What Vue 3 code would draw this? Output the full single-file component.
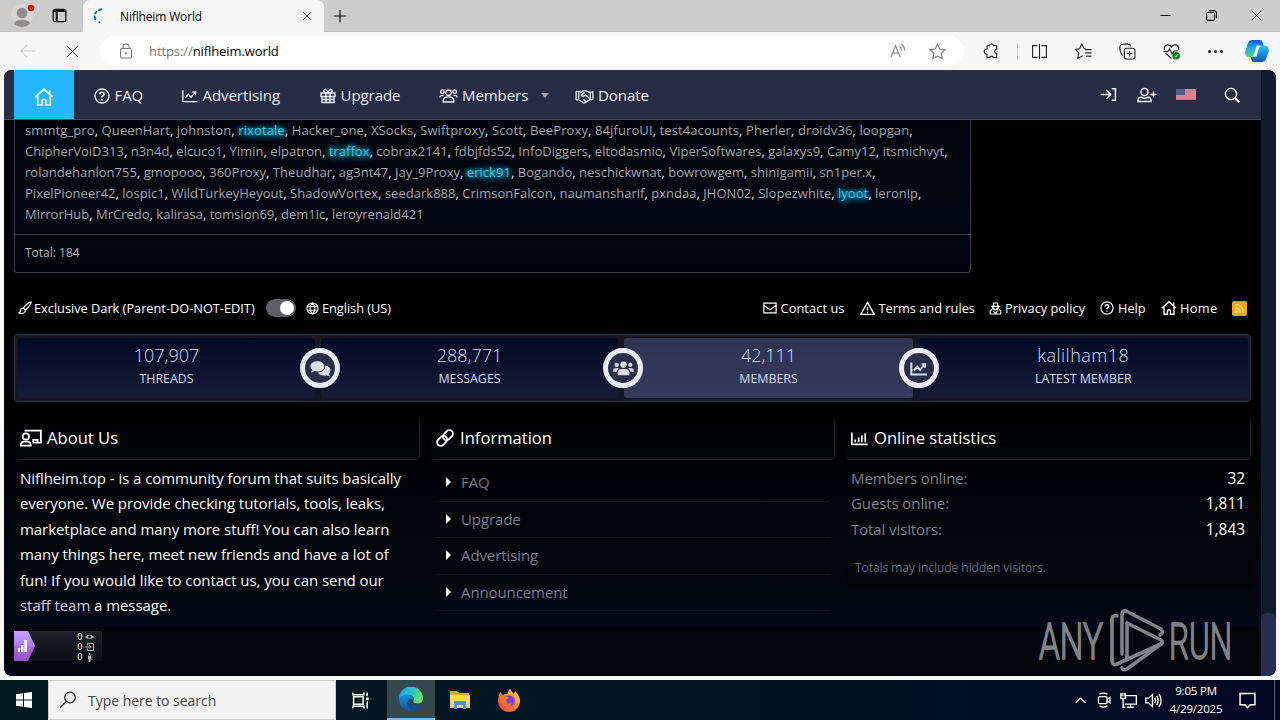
<script setup>
import { h } from 'vue'

// Outline icons share a 16-unit grid and inherit the text colour.
const icons = {
  home: '<path d="M1 8 8 1.8 15 8M3 6.8V14.3H6.5V10.6Q8 9 9.5 10.6V14.3H13V6.8M12.6 5.4V2.6"/>',
  help: '<circle cx="8" cy="8" r="7"/><path d="M5.7 6.3Q5.9 4.3 8 4.3T10.2 6.2Q10.1 7.3 8 8.4V9.6M8 11V12.4" stroke-width="1.6"/>',
  chart: '<path d="M.8 2.3V13.6H15.4M3.4 9.7 6.4 6.4 9 9.2 13.2 4.4M10.4 4H13.6V7.2"/>',
  gift: '<path d="M1 5H15V8.5H1ZM2 8.5V14.5H14V8.5M6 5V14.5M10 5V14.5M8 5Q5 5 3.8 3.6 3.6 1.4 5.6 1.5 7 1.8 8 5 9 1.8 10.4 1.5 12.4 1.4 12.2 3.6 11 5 8 5M2 11.5H14"/>',
  login: '<path d="M.5 8H9.7M5.8 3.8 10 8 5.8 12.2M11 2.5H14.5V13.5H11"/>',
  search: '<circle cx="7" cy="7" r="5.6"/><path d="M11 11 15.2 15.2" stroke-width="2"/>',
  brush: '<path d="M15 1Q12 1 6 8L8.5 10.5Q15 4 15 1ZM6 8Q2.5 8 3 12L1 13.5Q7.5 16 8.5 10.5"/>',
  globe: '<circle cx="8" cy="8" r="6.8"/><path d="M1.2 5.8H14.8M1.2 10.2H14.8M8 1.2C4 5 4 11 8 14.8M8 1.2C12 5 12 11 8 14.8"/>',
  mail: '<path d="M1 2.5H15V13.5H1ZM1 4.8 8 10 15 4.8"/>',
  warn: '<path d="M8 1.5 15.2 14.3H.8ZM8 6V10.2M8 11.4V12.8"/>',
  spy: '<path d="M5 5 6 1.2H10L11 5M2.5 5.3H13.5M4.5 6V8Q8 11 11.5 8V6M4 9 1.5 11V14.8H14.5V11L12 9M5 11 8 14 11 11M5 7.5H7M9 7.5H11"/>',
  link: '<g transform="rotate(-45 8 8)"><rect x="-.6" y="4.8" width="10" height="6.4" rx="3.2"/><rect x="6.6" y="4.8" width="10" height="6.4" rx="3.2"/></g>',
  bars: '<path d="M.8 2.3V13.6H15.6M4 9V11.5M7.2 7V11.5M10.2 5V11.5M13.4 3V11.5"/>',
  x: '<path d="M2 2 14 14M14 2 2 14"/>',
  plus: '<path d="M8 1V15M1 8H15"/>',
  min: '<path d="M2.5 8H13.5"/>',
  restore: '<rect x="2.8" y="4.7" width="8.5" height="8.5" rx="1.5"/><path d="M5 2.8H10.5Q13.2 2.8 13.2 5.5V11"/>',
  back: '<path d="M15.5 8H1M7 2 1 8 7 14"/>',
  lock: '<rect x="2.5" y="5.5" width="11" height="9.5" rx="1.5"/><path d="M5 5.5V3.6Q5 1 8 1T11 3.6V5.5"/><circle cx="8" cy="10.3" r=".6"/>',
  star: '<path d="M8 1 10.2 5.6 15.2 6.2 11.5 9.7 12.5 14.8 8 12.3 3.5 14.8 4.5 9.7.8 6.2 5.8 5.6Z"/>',
  read: '<path d="M1 14 5.6 2.6 10.2 14M2.6 10H8.6M9.5 3.5Q11.4 4.8 11.5 7.5M11 1Q14.5 3 14.6 7.5"/>',
  puzzle: '<path d="M3.8 2.6H6.2Q6.4 1 8 1T9.8 2.6H13V5.8Q11 6 11 7.8T13 9.8V13.8H9.8Q9.5 12.4 8 12.4T6.2 13.8H3.8V10.6Q1.2 10.4 1.2 8.1T3.8 5.7Z"/>',
  split: '<path d="M6 2.5H1.5V13.5H6M10 2.5H14.5V13.5H10M8 .8V15.2"/>',
  favs: '<path d="M10 5.4 8.6 5.2 6.4 1 4.4 5.4.6 6 3.4 9.3 2.6 14.3 7.2 12M9.4 6.2H15.6M9.2 9.3H15.6M10.4 12.4H15.6"/>',
  collect: '<rect x="5" y="5" width="10" height="10" rx="2"/><path d="M10 7.3V12.7M7.3 10H12.7M3.5 11.8Q.8 9 .8 4 .8 1.6 3 1.2L8 .8Q10.6 1 11.4 3.2"/>',
  heart: '<path d="M1.2 6.4Q.6 2.4 4.2 1.8 6.6 1.6 8 3.8 9.4 1.6 11.8 1.8 15.4 2.4 14.8 6.4M2.4 9.5 8 14.6M.5 8H4.5L6.2 5.5 8.6 10.5 10.4 7.5H14"/><circle cx="12.4" cy="12" r="3.6" fill="#107c10" stroke="none"/><path d="M10.8 12 12 13.2 14 10.8" stroke="#fff" stroke-width=".9"/>',
  pane: '<rect x="1.2" y="1.6" width="13.6" height="13" rx="2" stroke-width="1.4"/><path d="M1.5 3.2H14.5M5 4V14" stroke-width="2.2"/>',
  up: '<path d="M2 11 8 5 14 11"/>',
  meet: '<rect x="2.5" y="4.6" width="8.5" height="7" rx="1"/><path d="M11 7.2 14 5.4V10.8L11 9M3.5 2.3Q7.5-.2 11.5 2.3M3.5 13.9Q7.5 16.4 11.5 13.9"/>',
  net: '<path d="M5.5 3.4H15.4V11.4H4.4M10 11.4V14.4M6.5 14.4H13M.8 1.8H5V6H.8ZM2.9 6V14.4H5M2 3V4M3.8 3V4"/>',
  sound: '<path d="M.8 5.8H3.4L7 2.4V13.6L3.4 10.2H.8ZM9 5.5Q10.6 8 9 10.5M11 3.7Q13.8 8 11 12.3M13.2 2Q17 8 13.2 14"/>',
  note: '<path d="M1 1.5H15V12H10.5L8 14.8 5.5 12H1Z"/>',
  task: '<path d="M1.500 4.500H10.500V11.500H1.500ZM.8.500V2.500H11.200V.500M.8 15.500V13.500H11.200V15.500M14.300 .5V4M14.300 9V15.500"/><path d="M13 5.200H15.600V7.800H13Z" fill="currentColor" stroke="none"/>',
}
const wide = {
  group: '<circle cx="10" cy="4.6" r="2.9"/><circle cx="3.6" cy="3.4" r="1.9"/><circle cx="16.4" cy="3.4" r="1.9"/><path d="M4.5 14.3V12Q5 9 10 9T15.5 12V14.3ZM1 9.5Q1 7 4.8 7.3M19 9.5Q19 7 15.2 7.3"/>',
  shake: '<path d="M1 3.2H4L6 4.2 8.6 2.6H12L14.6 4H19M1 12H4L8.5 15Q10 15.6 11.4 14.4L16 11.8H19M1.2 3V12.2M18.8 3V12.2M4 4V11M16 4V11M10 4.4 6.8 7Q8.4 9.6 11.2 6.8L15.5 11M9 11.5 11 13.5"/>',
  useradd: '<circle cx="7.5" cy="5" r="3.6"/><path d="M1 14.5V13Q1 10.6 4 10.3L7.5 11.4 11 10.3Q14 10.6 14 13V14.5ZM13.5 7.5H19.5M16.5 4.5V10.5"/>',
  teach: '<circle cx="5.3" cy="6.6" r="2.9"/><path d="M.9 15V13.8Q1 11.4 4 11.4H6.8Q9.8 11.6 9.8 15ZM5 2.2V1.2H19V12.2H11.5M12 12V9.6H16V12"/>',
  groupfill: '<g fill="currentColor" stroke="none"><circle cx="10" cy="4.4" r="3"/><circle cx="3.5" cy="4.6" r="2"/><circle cx="16.5" cy="4.6" r="2"/><path d="M4.4 14.4V12Q4.8 8.4 8 8.4H12Q15.2 8.4 15.6 12V14.4ZM.2 11V9.4Q.6 7.4 4.6 7.6L5.4 8.2Q3.6 9.4 3.4 11ZM19.8 11V9.4Q19.4 7.4 15.4 7.6L14.6 8.2Q16.4 9.4 16.6 11Z"/></g>',
  chat: '<g fill="currentColor" stroke="none"><path d="M7 1.2C10.8 1.2 13.6 3.2 13.6 6S10.8 10.8 7 10.8Q5.6 10.8 4.4 10.4 2.8 11.6.8 11.7 2 10.4 2.2 9.2.4 7.8.4 6C.4 3.2 3.2 1.2 7 1.2Z"/><path d="M14.6 5.2Q19.6 6.2 19.6 10 19.6 11.8 18 13 18.2 14.4 19.3 15.5 17 15.4 15.6 14.4 9.6 15.6 7.4 11.8 14.8 11.4 14.6 5.2Z"/></g>',
}
const Ico = (p) => h('svg', {
  class: 'ico',
  viewBox: wide[p.n] ? '0 0 20 16' : '0 0 16 16',
  width: p.w || 16,
  height: p.t || p.w || 16,
  innerHTML: wide[p.n] || icons[p.n],
})
Ico.props = ['n', 'w', 't']

const nav = [
  { n: 'help', w: 16, t: 'FAQ', k: 'faq' },
  { n: 'chart', w: 16, t: 'Advertising', k: 'adv' },
  { n: 'gift', w: 16, t: 'Upgrade', k: 'upg' },
  { n: 'group', w: 19, t: 'Members', k: 'mem' },
  { n: 'shake', w: 19, t: 'Donate', k: 'don' },
]
const glow = ['rixotale', 'traffox', 'erick91', 'lyoot']
const lines = [
  'smmtg_pro, QueenHart, johnston, rixotale, Hacker_one, XSocks, Swiftproxy, Scott, BeeProxy, 84jfuroUI, test4acounts, Pherler, droidv36, loopgan,',
  'ChipherVoiD313, n3n4d, elcuco1, Yimin, elpatron, traffox, cobrax2141, fdbjfds52, InfoDiggers, eltodasmio, ViperSoftwares, galaxys9, Camy12, itsmichvyt,',
  'rolandehanlon755, gmopooo, 360Proxy, Theudhar, ag3nt47, Jay_9Proxy, erick91, Bogando, neschickwnat, bowrowgem, shinigamii, sn1per.x,',
  'PixelPioneer42, lospic1, WildTurkeyHeyout, ShadowVortex, seedark888, CrimsonFalcon, naumansharif, pxndaa, JHON02, Slopezwhite, lyoot, leronip,',
  'MirrorHub, MrCredo, kalirasa, tomsion69, dem1ic, leroyrenald421',
].map((l) => l.split(' ').map((w) => ({ name: w.replace(',', ''), comma: w.endsWith(',') })))

const stats = [
  { v: '107,907', l: 'THREADS' },
  { v: '288,771', l: 'MESSAGES', i: 'chat' },
  { v: '42,111', l: 'MEMBERS', i: 'groupfill', on: true },
  { v: 'kalilham18', l: 'LATEST MEMBER', i: 'chart' },
]
const links = ['FAQ', 'Upgrade', 'Advertising', 'Announcement']
const online = [['Members online:', '32'], ['Guests online:', '1,811'], ['Total visitors:', '1,843']]
const about = [
  'Niflheim.top - is a community forum that suits basically',
  'everyone. We provide checking tutorials, tools, leaks,',
  'marketplace and many more stuff! You can also learn',
  'many things here, meet new friends and have a lot of',
  'fun! If you would like to contact us, you can send our',
]
</script>

<template>
  <div class="screen">
    <header class="tabs">
      <div class="tools">
        <svg class="avatar" width="26" height="26" viewBox="0 0 26 26"><circle cx="12" cy="14" r="11" fill="#d6d5d4" /><circle cx="12" cy="12" r="5.300" fill="#8f8c8a" /><path d="M4 23Q4 19 12 19T20 23Q16 26 12 26T4 23Z" fill="#8f8c8a" /><circle cx="21" cy="7" r="3.200" fill="#e3101b" /></svg>
        <Ico n="pane" w="15" />
      </div>
      <div class="tab">
        <svg class="spin" width="16" height="16" viewBox="0 0 16 16" fill="none" stroke="#0f6cbd" stroke-width="2" stroke-linecap="round"><path d="M2.400 11 1.600 8.500M2.200 5.500 3.400 3.800M6 2 8.400 1.200M6.400 14.200H6.500" /></svg>
        <span class="tabname">Niflheim World</span>
        <Ico n="x" w="10" />
      </div>
      <Ico n="plus" w="14" class="newtab" />
      <div class="win"><Ico n="min" w="15" /><Ico n="restore" w="15" /><Ico n="x" w="13" /></div>
    </header>

    <div class="toolbar">
      <Ico n="back" w="16" class="back" />
      <Ico n="x" w="15" class="stop" />
      <div class="url">
        <Ico n="lock" w="16" />
        <span class="addr"><i>https://</i>niflheim.world</span>
        <Ico n="read" w="16" class="rd" />
        <Ico n="star" w="17" />
      </div>
      <Ico n="puzzle" w="17" class="pz" />
      <span class="vsep"></span>
      <Ico n="split" w="17" class="tb" /><Ico n="favs" w="17" class="tb" /><Ico n="collect" w="17" class="tb" /><Ico n="heart" w="17" class="tb" />
      <span class="dots"><b></b><b></b><b></b></span>
      <svg class="copilot" width="26" height="24" viewBox="0 0 26 24">
        <defs><linearGradient id="ca" x2="0" y2="1"><stop stop-color="#0a5bd0" /><stop offset=".45" stop-color="#25a8e8" /><stop offset="1" stop-color="#55d77b" /></linearGradient><linearGradient id="cb" x2="0" y2="1"><stop stop-color="#25c2f2" /><stop offset="1" stop-color="#1550d8" /></linearGradient></defs>
        <path d="M8 1H16Q18 1 18.500 3L20 7H17Q14 7 13 10L11 16Q10.400 18 8 18H5Q1 18 1 13L4 4Q5 1 8 1Z" fill="url(#ca)" />
        <path d="M18 23H10Q8 23 7.500 21L6.500 18H9Q12 18 13 14L15 9Q15.600 7 18 7H21Q25 7 25 12L22 20Q21 23 18 23Z" fill="url(#cb)" /><path d="M12.600 6.600H16.500Q15 8 14.300 11L12.600 17.500H9.400Z" fill="#fff" />
      </svg>
    </div>

    <main class="frame">
      <div class="page">
        <nav class="nav">
          <a class="homebtn"><Ico n="home" w="20" /></a>
          <a v-for="i in nav" :key="i.k" class="item" :class="i.k"><Ico :n="i.n" :w="i.w" t="16" /><span>{{ i.t }}</span><b v-if="i.k === 'mem'" class="caret"></b></a>
          <div class="right">
            <Ico n="login" w="17" /><Ico n="useradd" w="20" t="16" />
            <svg class="flag" width="20" height="11" viewBox="0 0 20 11"><path fill="#f4a6ad" d="M0 0H20V11H0Z" /><path stroke="#e4757f" stroke-width="1" d="M0 1H20M0 3H20M0 5H20M0 7H20M0 9H20M0 10.700H20" /><path fill="#5b5f94" d="M0 0H9V6H0Z" /></svg>
            <Ico n="search" w="16" />
          </div>
        </nav>

        <section class="card">
          <p v-for="(l, i) in lines" :key="i" class="names" :class="'l' + i"><template v-for="(w, j) in l" :key="j"><span :class="{ glow: glow.includes(w.name) }">{{ w.name }}</span><template v-if="w.comma">, </template></template></p>
          <div class="total">Total: 184</div>
        </section>

        <div class="sitebar">
          <span class="lk theme"><Ico n="brush" w="14" />Exclusive Dark (Parent-DO-NOT-EDIT)</span>
          <span class="switch"></span>
          <span class="lk lang"><Ico n="globe" w="13" />English (US)</span>
          <span class="lk contact"><Ico n="mail" w="14" />Contact us</span>
          <span class="lk terms"><Ico n="warn" w="15" />Terms and rules</span>
          <span class="lk privacy"><Ico n="spy" w="13" />Privacy policy</span>
          <span class="lk helpl"><Ico n="help" w="14" />Help</span>
          <span class="lk homel"><Ico n="home" w="16" />Home</span>
          <svg class="rss" width="15" height="15" viewBox="0 0 15 15"><rect width="15" height="15" rx="2" fill="#f9a20d" /><g fill="none" stroke="#ffe6b0" stroke-width="1.200"><path d="M3 3.500Q11.500 3.500 11.500 12M3 6.800Q8.200 6.800 8.200 12" /><circle cx="4.300" cy="10.700" r=".8" /></g></svg>
        </div>

        <section class="stats">
          <div v-for="s in stats" :key="s.l" class="cell" :class="{ on: s.on }">
            <span v-if="s.i" class="disc"><Ico :n="s.i" :w="s.i === 'chart' ? 18 : 21" t="17" /></span>
            <strong>{{ s.v }}</strong><small>{{ s.l }}</small>
          </div>
        </section>

        <section class="cols">
          <div class="col">
            <h3><Ico n="teach" w="22" t="18" /><span>About Us</span></h3>
            <div class="about"><p v-for="a in about" :key="a">{{ a }}</p><p><em>staff team</em> a message.</p></div>
          </div>
          <div class="col info">
            <h3><Ico n="link" w="18" /><span>Information</span></h3>
            <ul><li v-for="l in links" :key="l"><b></b>{{ l }}</li></ul>
          </div>
          <div class="col online">
            <h3><Ico n="bars" w="17" /><span>Online statistics</span></h3>
            <dl><div v-for="o in online" :key="o[0]"><dt>{{ o[0] }}</dt><dd>{{ o[1] }}</dd></div></dl>
            <div class="hint">Totals may include hidden visitors.</div>
          </div>
        </section>

        <div class="counter">
          <svg class="flagmark" width="21" height="30" viewBox="0 0 21 30"><defs><linearGradient id="pg" x2="0" y2="1"><stop stop-color="#c9a2ff" /><stop offset=".5" stop-color="#b07af2" /><stop offset=".52" stop-color="#a46be0" /><stop offset="1" stop-color="#9650c4" /></linearGradient></defs><path d="M0 0H14L21 15 14 30H0Z" fill="url(#pg)" /><path fill="#fff" d="M4 17H6V21H4ZM7 14H9.400V21H7ZM10.400 9H13V21H10.400Z" /></svg>
          <div class="nums">
            <span>0<svg width="9" height="8" viewBox="0 0 9 8"><path d="M0 4Q4.500-.5 9 4 4.500 8 0 4Z" fill="#bbb" /><circle cx="4.500" cy="3.800" r="1.500" fill="#222" /></svg></span>
            <span>0<svg width="9" height="8" viewBox="0 0 9 8" fill="none" stroke="#bbb"><path d="M2.500 2.500V.5H8.500V7.500H2.500V5.500M0 4H6M4.500 2.300 6.200 4 4.500 5.700" /></svg></span>
            <span>0<svg width="9" height="9" viewBox="0 0 9 9"><path d="M3 2.500H6V6H5.500V9H3.500V6H3ZM4.500 0A1 1 0 0 1 4.500 2 1 1 0 0 1 4.500 0Z" fill="#bbb" /><path d="M7 1V7" stroke="#777" /></svg></span>
          </div>
        </div>
      </div>
      <div class="scroll"><div class="thumb"></div></div>
      <svg class="mark" width="200" height="66" viewBox="0 0 200 66">
        <text x="3" y="52" textLength="64" lengthAdjust="spacingAndGlyphs">ANY</text>
        <text x="133" y="52" textLength="63" lengthAdjust="spacingAndGlyphs">RUN</text>
        <g fill="none" stroke="#82838a" stroke-width="3.600" stroke-linejoin="round" stroke-linecap="round"><path d="M81 9Q76 8 76 12V54Q77 59 81 57L125 37Q128 35 125 33L91 16V51" /><path d="M86 47V8Q86 3 90 4L125 22Q128 26 124 28" /><path d="M86 61Q87 64 91 62L125 37" /></g>
      </svg>
    </main>

    <footer class="taskbar">
      <div class="start"><svg width="16" height="16" viewBox="0 0 16 16" fill="#fff"><path d="M0 2.200 7 1.200V7.500H0ZM8 1 16 0V7.500H8ZM0 8.500H7V14.800L0 13.800ZM8 8.500H16V16L8 15Z" /></svg></div>
      <div class="find"><svg width="18" height="18" viewBox="0 0 18 18" fill="none" stroke="#222" stroke-width="1.300"><circle cx="11" cy="6.500" r="5.300" /><path d="M7.200 10.400 1 16.800" /></svg><span>Type here to search</span></div>
      <div class="app"><Ico n="task" w="17" /></div>
      <div class="app active">
        <svg width="24" height="24" viewBox="0 0 24 24"><defs><linearGradient id="ea" x2="1" y2=".3"><stop stop-color="#199de0" /><stop offset=".6" stop-color="#2cc3c9" /><stop offset="1" stop-color="#6bdf63" /></linearGradient><linearGradient id="eb" x2="0" y2="1"><stop stop-color="#178ddb" /><stop offset="1" stop-color="#0b59a8" /></linearGradient></defs><path d="M0 12A12 12 0 0 1 24 11Q24 16 19 16.500 14 16.500 14.300 14 16 12 14 9.500 9 5 0 12Z" fill="url(#ea)" /><path d="M0 12Q3 6 10 8 15 9 14.800 13 11 10 9.500 13 9 17 13 19 17 20.600 21.500 18 18 24 12 24A12 12 0 0 1 0 12Z" fill="url(#eb)" /><path d="M9.500 13Q6 18 12 24 18 24 21.500 18 17 20.600 13 19 9 17 9.500 13Z" fill="#0c4f9f" /></svg>
      </div>
      <div class="app folder"><svg width="22" height="20" viewBox="0 0 22 20"><path d="M1 1H8L10 3H20V18H1Z" fill="#e9a522" /><path d="M1 5H21V18H1Z" fill="#fcd462" /><path d="M5 19V12Q5 11 6 11H16Q17 11 17 12V19H14V15H8V19Z" fill="#3f98d8" /></svg></div>
      <div class="app"><svg width="24" height="24" viewBox="0 0 24 24"><defs><linearGradient id="ff" x1="1" x2="0" y2="1"><stop stop-color="#ffe14a" /><stop offset=".45" stop-color="#ff8a1f" /><stop offset="1" stop-color="#f4255e" /></linearGradient></defs><path d="M3 4 6 7Q8 5.500 10 6 11 3 13 1 15 4 17 6L18 3Q23 8 23 13A11 11 0 0 1 1 13Q1 8 3 4Z" fill="url(#ff)" /><circle cx="12.300" cy="12.800" r="5.600" fill="#7a3fe0" /><path d="M4 9Q9 7 12 10 9 11 9 13 10 17 15 15 12 20 7.500 18 3 15 4 9Z" fill="#ff7a22" /></svg></div>
      <div class="tray"><Ico n="up" w="13" /><Ico n="meet" w="16" /><Ico n="net" w="17" /><Ico n="sound" w="17" /></div>
      <div class="clock"><span>9:05 PM</span><span>4/29/2025</span></div>
      <Ico n="note" w="17" class="bell" />
      <span class="peek"></span>
    </footer>
  </div>
</template>

<style>
body { margin: 0; overflow: hidden; background: #f7f7f7; }
</style>

<style scoped>
* { box-sizing: border-box; }
p, h3, ul, dl, dd { margin: 0; padding: 0; }
i, em { font-style: normal; }
.screen { width: 1280px; height: 720px; display: flex; flex-direction: column; font-family: "Open Sans", "Noto Sans", sans-serif; background: #f7f7f7; overflow: hidden; }
.ico { fill: none; stroke: currentColor; stroke-width: 1.4; flex: none; display: block; overflow: visible; }
svg { flex: none; display: block; }

.tabs { height: 32px; background: #cdcdcd; display: flex; align-items: center; color: #111; border-bottom: 1px solid #c2c2c2; }
.tools { width: 83px; height: 32px; display: flex; align-items: center; padding-left: 10px; gap: 16px; border-bottom-right-radius: 6px; border-right: 1px solid #bdbdbd; }
.avatar { margin-top: -4px; }
.tab { width: 241px; height: 33px; margin-bottom: -1px; background: #f7f7f7; border-radius: 7px 7px 0 0; display: flex; align-items: center; padding: 0 12px 0 10px; }
.tabname { margin-left: 11px; flex: 1; font-size: 12px; letter-spacing: -.15px; color: #000; }
.newtab { margin-left: 9px; }
.win { margin-left: auto; display: flex; align-items: center; gap: 31px; padding-right: 17px; }
.win .ico { stroke-width: 1.1; }

.toolbar { height: 38px; display: flex; align-items: center; color: #222; }
.toolbar .ico { stroke-width: 1.05; }
.back { margin-left: 20px; color: #ccc; }
.stop { margin-left: 28.5px; }
.url { margin-left: 20.5px; width: 864px; height: 30px; border-radius: 15px; background: #fff; display: flex; align-items: center; padding: 0 18px; color: #777; }
.addr { margin-left: 15px; flex: 1; font-size: 13px; letter-spacing: -.09px; color: #000; }
.addr i { color: #777; }
.rd { margin-right: 23px; }
.pz { margin-left: 19px; }
.vsep { width: 1px; height: 16px; background: #ccc; margin: 0 13px 0 17px; }
.tb { margin-right: 27.1px; }
.dots { display: flex; gap: 3px; margin-left: .5px; }
.dots b { width: 3px; height: 3px; border-radius: 50%; background: #222; }
.copilot { margin-left: 21.5px; }

.frame { position: relative; margin: 0 4px; height: 606px; display: flex; border-radius: 8px; overflow: hidden; background: #000; }
.page { width: 1257px; background: linear-gradient(#000 0, #000 345px, #040815 556px, #03050d 557px, #04060c 606px); }
.nav { height: 50px; background: #282d46; border-bottom: 1px solid #444a62; display: flex; padding-left: 10px; color: #e9ecfb; }
.homebtn { width: 60px; height: 49px; background: #24b7fd; display: flex; align-items: center; justify-content: center; padding-top: 4px; margin-right: 20px; }
.item { display: flex; align-items: center; gap: 5px; font-size: 15px; height: 51px; }
.item span { margin: -2px 0 0 -.5px; letter-spacing: -.06px; }
.faq { width: 88px; } .adv { width: 138px; } .upg { width: 118.5px; } .mem { width: 136px; }
.caret { border: 4.5px solid transparent; border-top: 5px solid #9b9cad; border-bottom: 0; margin-left: 8px; }
.right { margin-left: auto; width: 161px; display: flex; align-items: center; height: 49px; color: #f6f7ff; }
.right .ico:nth-child(2) { margin-left: 20px; }
.flag { margin-left: 19px; opacity: .9; }
.right .ico:last-child { margin-left: 28px; }

.card { width: 957px; height: 153px; margin-left: 10px; border: 1px solid #383c4b; border-top: 0; border-radius: 0 0 3px 3px; background: linear-gradient(#01030a, #040714 100px, #030610 114px, #010206 152px); }
.names { height: 21px; line-height: 21px; padding-left: 10px; font-size: 13px; color: #e8e8e8; white-space: nowrap; }
.names span { color: #a3a5aa; }
.l0 { letter-spacing: .1px; } .l1, .l2, .l3 { letter-spacing: .022px; }
.l2 { letter-spacing: .035px; }
.names .glow { color: #27d3e8; text-shadow: 0 0 5px #00b4d8, 0 0 7px #00a0c8, 0 2px 9px #0793ad; }
.total { margin-top: 9px; border-top: 1px solid #41444f; height: 38px; line-height: 36px; padding-left: 10px; font-size: 12px; color: #b5b7bd; }

.sitebar { height: 24px; margin: 23px 10px 0 14px; display: flex; align-items: center; font-size: 12.8px; color: #fff; white-space: nowrap; }
.lk { display: flex; align-items: center; gap: 2px; flex: none; }
.theme { width: 248px; letter-spacing: -.02px; }
.switch { width: 30px; height: 18px; border-radius: 9px; background: #606064; display: flex; justify-content: flex-end; padding: 2px; }
.switch::after { content: ""; width: 14px; height: 14px; border-radius: 50%; background: #fff; }
.lang { margin-left: 10px; flex: 1; gap: 3px; letter-spacing: -.05px; }
.contact { width: 97px; gap: 4px; letter-spacing: .08px; } .terms { width: 129.5px; gap: 4px; } .privacy { width: 111px; gap: 3px; } .helpl { width: 61px; gap: 4px; } .homel { width: 71px; gap: 3px; letter-spacing: .3px; }
.rss { margin-right: 4px; }

.stats { margin: 14px 0 0 10px; width: 1237px; height: 68px; border: 1px solid #33353e; border-radius: 4px; background: #171a22; display: grid; grid-template-columns: 297px 297px 289px 328.5px; column-gap: 6px; padding: 3px; }
.cell { position: relative; height: 60px; display: flex; flex-direction: column; align-items: center; border-radius: 3px; background: linear-gradient(#020a26, #171b37); box-shadow: 0 0 4px #111729; color: #d6daf0; }
.cell.on { background: linear-gradient(#2d3350, #343a5b); }
.cell strong { font-weight: 300; font-size: 18px; line-height: 24px; margin-top: 5px; }
.cell:last-child strong { letter-spacing: .5px; }
.cell small { font-size: 12.4px; line-height: 18px; margin: 3px 0 0 0; font-weight: 400; }
.disc { position: absolute; left: -21px; top: 10px; width: 40px; height: 40px; border-radius: 50%; border: 5px solid #e8ebfc; background: #292e4a; display: flex; align-items: center; justify-content: center; color: #d9dce9; }
.cell:last-child .disc { left: -20px; }
.disc .ico { stroke-width: 2; }

.cols { margin: 15px 0 0 10px; width: 1237px; height: 212px; display: grid; grid-template-columns: 406px 405px 406px; column-gap: 10px; }
h3 { height: 43px; border: 1px solid #1c1e24; border-top-color: transparent; border-left-color: transparent; border-radius: 5px; background: linear-gradient(#000, #020408); display: flex; align-items: center; gap: 5px; padding: 0 0 1px 5px; color: #fff; font-size: 16.6px; font-weight: 400; }
h3 span { margin-top: -1px; }
h3 .ico { stroke-width: 1.6; }
.info h3, .online h3 { gap: 6px; }
.about { padding: 6px 0 0 6px; color: #fafafa; font-size: 15px; letter-spacing: -.06px; white-space: nowrap; }
.about p { height: 25.4px; line-height: 25.4px; }
.about em { color: #d2d3ec; }
ul { list-style: none; padding: 5px 5px 0 5px; }
li { height: 36.6px; display: flex; align-items: center; padding: 0 0 1px 11px; border-bottom: 1px solid #0f121b; color: #787b8c; font-size: 15px; letter-spacing: -.1px; }
li b { border: 5px solid transparent; border-left: 5px solid #fff; border-right: 0; margin-right: 10px; }
dl { padding: 6px 6px 0 6px; font-size: 15px; }
dl div { height: 25.4px; line-height: 25.4px; display: flex; justify-content: space-between; color: #fff; }
dt { color: #80828f; letter-spacing: -.1px; }
dd { font-size: 15.4px; }
.hint { margin: 6.8px 0 0 1px; height: 38px; line-height: 38px; background: #03050c; padding-left: 9px; font-size: 12px; letter-spacing: -.05px; color: #6a6c80; border-radius: 4px; }

.counter { margin: 2px 0 0 10px; width: 88px; height: 30px; display: flex; background: linear-gradient(#20222a, #0b0d13); }
.nums { margin-left: 42px; display: flex; flex-direction: column; font: 9px "DejaVu Sans", sans-serif; color: #fff; }
.nums span { height: 10px; line-height: 11px; display: flex; align-items: center; gap: 2px; padding-top: 2px; }
.scroll { width: 15px; background: #131b2e; display: flex; align-items: flex-end; }
.thumb { width: 15px; height: 63px; background: #2b2b54; border-radius: 6px 6px 0 0; }
.mark { position: absolute; left: 1032px; top: 537px; overflow: visible; }
.mark text { font: 300 50px Roboto, sans-serif; fill: #82838a; stroke: #82838a; stroke-width: 1.6; }

.taskbar { margin-top: 4px; height: 40px; display: flex; align-items: stretch; background: linear-gradient(90deg, #001a21, #001620 45%, #001025 75%, #030724); color: #fff; }
.start { width: 48px; display: flex; align-items: center; justify-content: center; }
.find { width: 288px; background: #f2f2f2; border: 1px solid #cfcfcf; display: flex; align-items: center; gap: 11px; padding-left: 10px; color: #444; font-size: 14px; letter-spacing: -.03px; }
.app { width: 48px; display: flex; align-items: center; justify-content: center; }
.app:nth-child(3) { width: 51px; padding-right: 3px; }
.folder { width: 50px; }
.active { background: #33484f; border-bottom: 2px solid #76b9ed; }
.tray { margin-left: auto; display: flex; align-items: center; gap: 8px; }
.tray .ico { stroke-width: 1.3; }
.tray .ico:first-child { margin-right: 1px; }
.clock { width: 68px; margin-left: 0; display: flex; flex-direction: column; align-items: center; justify-content: center; font-size: 11.5px; line-height: 18px; letter-spacing: -.2px; padding-bottom: 1px; }
.bell { align-self: center; margin-left: 9px; }
.peek { width: 1px; margin: 0 5px 0 18px; background: #5a5e70; }
</style>
